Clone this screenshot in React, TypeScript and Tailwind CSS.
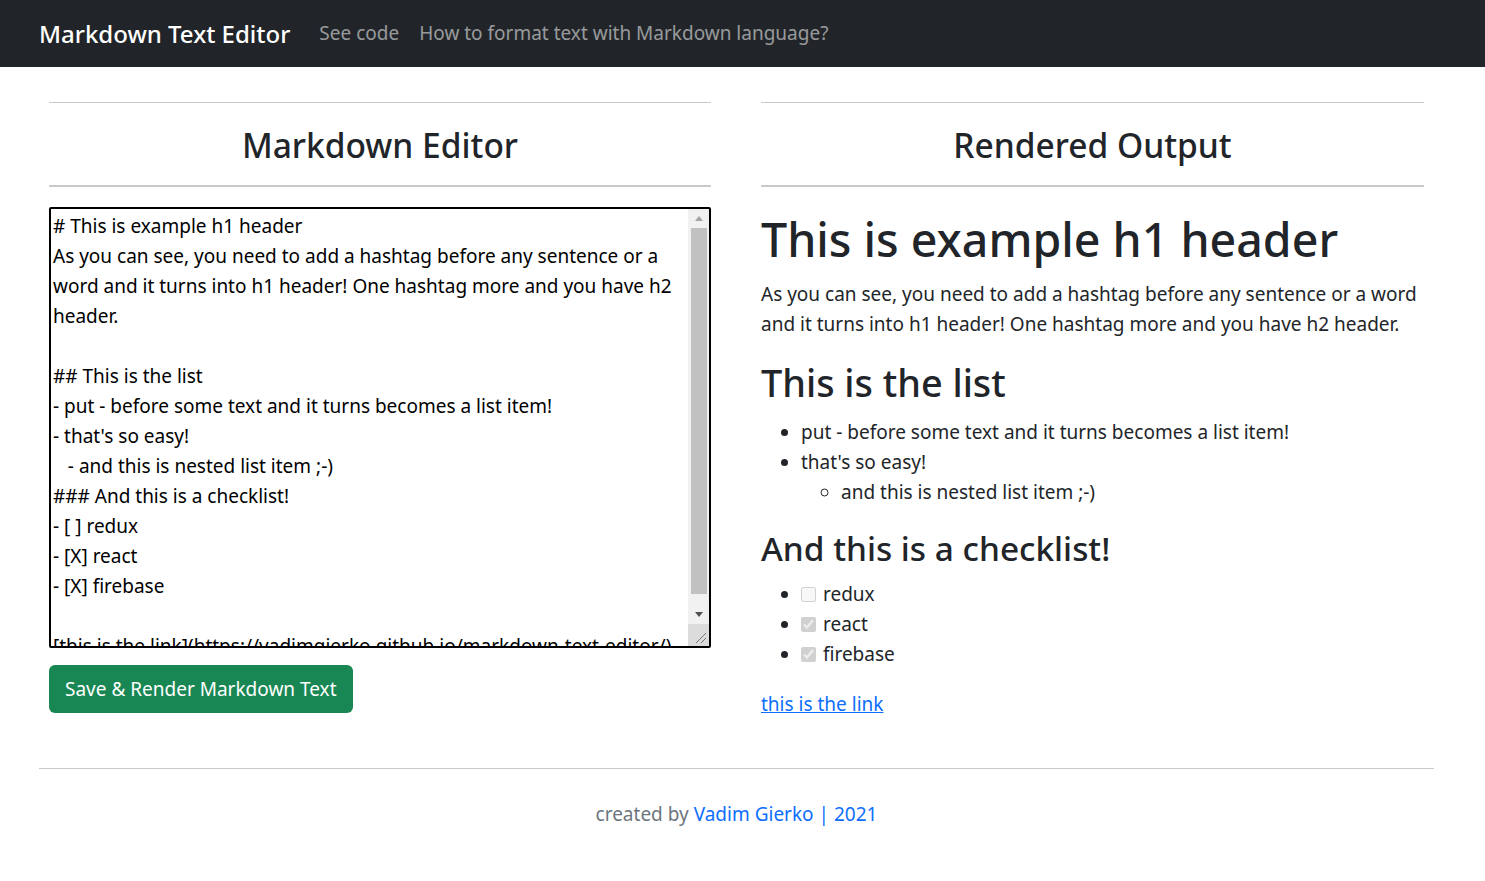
import { useState } from "react";

const initialText = `# This is example h1 header
As you can see, you need to add a hashtag before any sentence or a word and it turns into h1 header! One hashtag more and you have h2 header.

## This is the list
- put - before some text and it turns becomes a list item!
- that's so easy!
   - and this is nested list item ;-)
### And this is a checklist!
- [ ] redux
- [X] react
- [X] firebase

[this is the link](https://vadimgierko.github.io/markdown-text-editor/)`;

const font = { fontFamily: '"Noto Sans", "Open Sans", sans-serif' };

const SectionTitle = ({ title }: { title: string }) => (
  <div className="flex flex-col">
    <hr className="border-t border-[#c8c9ca]" />
    <h2 className="pb-[16px] pt-[18px] text-center text-[33.5px] font-medium leading-[48px] text-[#212529]">
      {title}
    </h2>
    <hr className="border-t-2 border-[#c8c9ca]" />
  </div>
);

const CheckItem = ({ label, checked }: { label: string; checked: boolean }) => (
  <li className="h-[30px] leading-[30px]">
    <input
      type="checkbox"
      checked={checked}
      disabled
      readOnly
      className="mr-[7px] inline-block h-[15px] w-[15px] align-[-1px]"
    />
    <span className="inline-block align-top">{label}</span>
  </li>
);

// classic scrollbar look of the textarea (headless hides the real one)
const FakeScrollbar = () => (
  <div className="flex w-[21px] shrink-0 flex-col bg-[#f1f1f1]">
    <div className="flex h-[19px] items-center justify-center">
      <svg width="8" height="5" viewBox="0 0 8 5">
        <path d="M0 5 L4 0 L8 5 Z" fill="#a3a3a3" />
      </svg>
    </div>
    <div className="ml-[3px] mr-[2px] h-[366px] bg-[#c1c1c1]" />
    <div className="flex-1" />
    <div className="flex h-[19px] items-center justify-center">
      <svg width="8" height="5" viewBox="0 0 8 5">
        <path d="M0 0 L8 0 L4 5 Z" fill="#505050" />
      </svg>
    </div>
    <div className="flex h-[22px] items-end justify-end bg-[#dcdcdc] pb-[2px] pr-[2px]">
      <svg width="12" height="12" viewBox="0 0 12 12">
        <path d="M11 1 L1 11 M11 6 L6 11" stroke="#777" strokeWidth="1" />
      </svg>
    </div>
  </div>
);

export default function App() {
  const [text, setText] = useState(initialText);

  return (
    <div className="min-h-screen bg-white text-[#212529]" style={font}>
      <nav className="flex h-[67px] items-center bg-[#212529] px-[39px]">
        <span className="mr-[29px] text-[24px] font-medium text-white">
          Markdown Text Editor
        </span>
        <div className="flex gap-[20px] text-[19px] text-[#ffffff8c]">
          <a href="#">See code</a>
          <a href="#">How to format text with Markdown language?</a>
        </div>
      </nav>

      <main className="flex gap-[50px] pl-[49px] pt-[35px]">
        <section className="flex w-[662px] flex-col">
          <SectionTitle title="Markdown Editor" />
          <div className="mt-[20px] flex h-[441px] w-full overflow-hidden rounded-[2px] border-2 border-black">
            <textarea
              value={text}
              onChange={(e) => setText(e.target.value)}
              spellCheck
              className="h-full flex-1 resize-none overflow-hidden px-[2px] pt-[2px] text-[19px] leading-[30px] text-black outline-none"
              style={font}
            />
            <FakeScrollbar />
          </div>
          <div className="mt-[17px]">
            <button className="h-[48px] rounded-[6px] bg-[#198754] px-[16px] text-[19px] text-white">
              Save &amp; Render Markdown Text
            </button>
          </div>
        </section>

        <section className="flex w-[663px] flex-col">
          <SectionTitle title="Rendered Output" />
          <div className="pt-[22px] text-[19px] leading-[30px]">
            <h1 className="mb-[10px] text-[46.5px] font-medium leading-[60px]">
              This is example h1 header
            </h1>
            <p className="mb-[20px]">
              As you can see, you need to add a hashtag before any sentence or a
              word and it turns into h1 header! One hashtag more and you have h2
              header.
            </p>
            <h2 className="mb-[10px] text-[37.8px] font-medium leading-[48px]">
              This is the list
            </h2>
            <ul className="mb-[20px] list-disc pl-[40px]">
              <li>put - before some text and it turns becomes a list item!</li>
              <li>
                that's so easy!
                <ul className="list-[circle] pl-[40px]">
                  <li>and this is nested list item ;-)</li>
                </ul>
              </li>
            </ul>
            <h3 className="mb-[10px] text-[33.4px] font-medium leading-[42px]">
              And this is a checklist!
            </h3>
            <ul className="mb-[20px] list-disc pl-[40px]">
              <CheckItem label="redux" checked={false} />
              <CheckItem label="react" checked />
              <CheckItem label="firebase" checked />
            </ul>
            <p>
              <a href="#" className="text-[#0d6efd] underline">
                this is the link
              </a>
            </p>
          </div>
        </section>
      </main>

      <footer className="mt-[49px] pl-[39px]">
        <hr className="w-[1395px] border-t border-[#c8c9ca]" />
        <p className="w-[1395px] pt-[31px] text-center text-[19px] text-[#6c757d]">
          created by{" "}
          <a href="#" className="text-[#0d6efd]">
            Vadim Gierko | 2021
          </a>
        </p>
      </footer>
    </div>
  );
}
